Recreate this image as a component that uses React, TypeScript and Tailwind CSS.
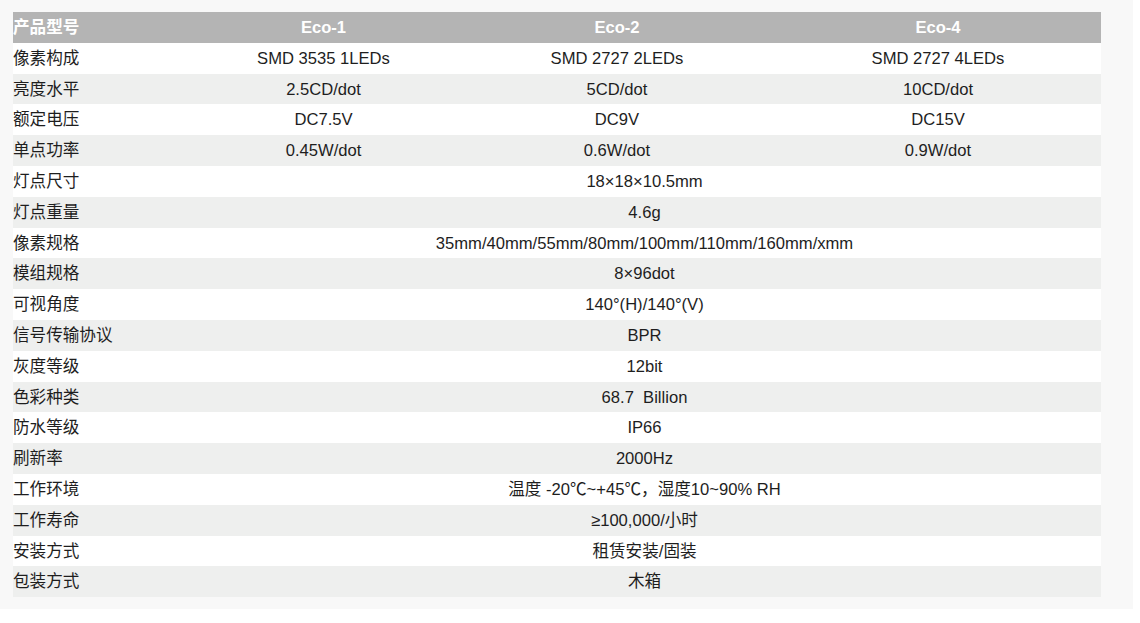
const models = ["Eco-1", "Eco-2", "Eco-4"];

// 前四行每个型号各有一个值，其余行三个型号共用
const specs: { label: string; values: string[] }[] = [
  { label: "像素构成", values: ["SMD 3535 1LEDs", "SMD 2727 2LEDs", "SMD 2727 4LEDs"] },
  { label: "亮度水平", values: ["2.5CD/dot", "5CD/dot", "10CD/dot"] },
  { label: "额定电压", values: ["DC7.5V", "DC9V", "DC15V"] },
  { label: "单点功率", values: ["0.45W/dot", "0.6W/dot", "0.9W/dot"] },
  { label: "灯点尺寸", values: ["18×18×10.5mm"] },
  { label: "灯点重量", values: ["4.6g"] },
  { label: "像素规格", values: ["35mm/40mm/55mm/80mm/100mm/110mm/160mm/xmm"] },
  { label: "模组规格", values: ["8×96dot"] },
  { label: "可视角度", values: ["140°(H)/140°(V)"] },
  { label: "信号传输协议", values: ["BPR"] },
  { label: "灰度等级", values: ["12bit"] },
  { label: "色彩种类", values: ["68.7  Billion"] },
  { label: "防水等级", values: ["IP66"] },
  { label: "刷新率", values: ["2000Hz"] },
  { label: "工作环境", values: ["温度 -20℃~+45℃，湿度10~90% RH"] },
  { label: "工作寿命", values: ["≥100,000/小时"] },
  { label: "安装方式", values: ["租赁安装/固装"] },
  { label: "包装方式", values: ["木箱"] },
];

export default function App() {
  return (
    <div className="min-h-[623px] w-[1140px] bg-white">
      <div
        className="h-[609px] w-[1133px] bg-[#f8f8f8] pl-[13px] pt-[12px]"
        style={{ fontFamily: '"Liberation Sans", Arial, "Noto Sans CJK SC", sans-serif' }}
      >
        <table className="w-[1088px] table-fixed border-collapse text-[16.6px] text-[#1e1e1e]">
          <colgroup>
            <col className="w-[175px]" />
            <col className="w-[271px]" />
            <col className="w-[316px]" />
            <col className="w-[326px]" />
          </colgroup>
          <thead>
            <tr className="h-[30.8px] bg-[#b4b4b4] font-bold text-white">
              <th className="p-0 pt-[2px] text-left align-middle font-bold">产品型号</th>
              {models.map((m) => (
                <th key={m} className="p-0 pt-[2px] text-center align-middle font-bold">
                  {m}
                </th>
              ))}
            </tr>
          </thead>
          <tbody>
            {specs.map((row, i) => (
              <tr
                key={row.label}
                className={i % 2 === 0 ? "h-[30.8px] bg-white" : "h-[30.8px] bg-[#eeefee]"}
              >
                <td className="p-0 pt-[2px] text-left align-middle whitespace-nowrap">{row.label}</td>
                {row.values.length === 1 ? (
                  <td colSpan={3} className="p-0 pt-[2px] text-center align-middle whitespace-pre">
                    {row.values[0]}
                  </td>
                ) : (
                  row.values.map((v, j) => (
                    <td key={j} className="p-0 pt-[2px] text-center align-middle whitespace-pre">
                      {v}
                    </td>
                  ))
                )}
              </tr>
            ))}
          </tbody>
        </table>
      </div>
    </div>
  );
}
